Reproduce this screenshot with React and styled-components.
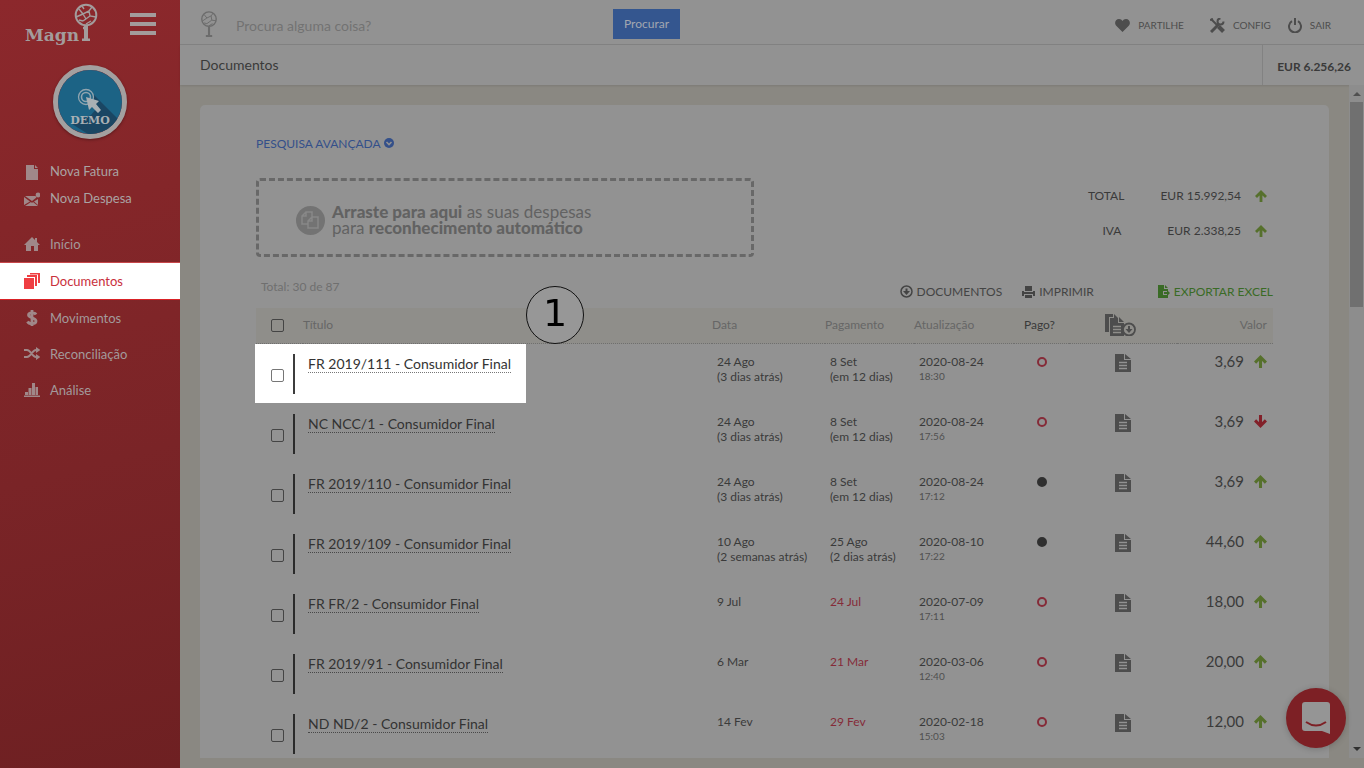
import React from "react";
import styled, { createGlobalStyle, css } from "styled-components";

const colors = {
  surface: "#929292",
  canvas: "#8a8882",
  band: "#8f8e8a",
  line: "#828282",
  text: "#3a3a3a",
  muted: "#666666",
  pale: "#727272",
  icon: "#4d4d4d",
  blue: "#34508a",
  red: "#852b38",
  green: "#56702c",
  side: "#a39a9b",
};

const GlobalStyle = createGlobalStyle`
  * {
    box-sizing: border-box;
  }
  body {
    margin: 0;
    background: ${colors.canvas};
    color: ${colors.text};
    font-family: Lato, "Liberation Sans", sans-serif;
    font-size: 13px;
    line-height: 15px;
  }
  button,
  input {
    font: inherit;
  }
  a {
    color: inherit;
    text-decoration: none;
  }
  svg {
    display: block;
    flex: none;
  }
`;

const Shell = styled.div`
  display: grid;
  grid-template-columns: 180px minmax(0, 1fr);
  height: 100vh;
  overflow: hidden;
`;

const Sidebar = styled.aside`
  background: linear-gradient(165deg, #8c282c 0%, #842629 28%, #7a2427 60%, #6e2022 100%);
`;

const Brand = styled.div`
  display: flex;
  justify-content: space-between;
  height: 47px;
  padding: 0 24px 0 25px;
`;

const Plain = styled.button`
  display: flex;
  align-items: center;
  padding: 0;
  border: 0;
  background: none;
  color: inherit;
  cursor: pointer;
`;

const Avatar = styled.div`
  width: 74px;
  height: 74px;
  margin: 18px auto 19px 53px;
  border: 5px solid #a3a0a0;
  border-radius: 50%;
  overflow: hidden;
  box-shadow: 0 1px 3px rgba(0, 0, 0, 0.35);
`;

const Nav = styled.nav`
  display: flex;
  flex-direction: column;
  margin-bottom: ${(p) => (p.$tight ? "14px" : "0")};
`;

const NavLink = styled.a`
  display: flex;
  align-items: center;
  gap: 10px;
  height: ${(p) => (p.$tight ? "27px" : "36px")};
  padding-left: 24px;
  color: ${(p) => (p.$strong ? "#aaa3a3" : colors.side)};
  font-size: 13px;

  svg {
    width: 16px;
    height: 16px;
    fill: #a08889;
  }

  ${(p) =>
    p.$active &&
    css`
      height: 38px;
      border-top: 1px solid #c8474a;
      border-bottom: 1px solid #d92226;
      background: #ffffff;
      color: #c9303c;

      svg {
        fill: #ef3e42;
      }
    `}
`;

const Page = styled.div`
  display: flex;
  flex-direction: column;
  min-width: 0;
  height: 100vh;
  padding-bottom: 10px;
`;

const TopBar = styled.header`
  display: flex;
  align-items: center;
  flex: none;
  height: 45px;
  padding: 0 33px 0 20px;
  border-bottom: 1px solid ${colors.line};
  background: ${colors.surface};
`;

const SearchForm = styled.form`
  display: flex;
  align-items: center;
  flex: 1;
  height: 44px;
  padding-top: 3px;
`;

const SearchInput = styled.input`
  width: 377px;
  margin-left: 18px;
  padding: 3px 0 0;
  border: 0;
  outline: 0;
  background: none;
  color: ${colors.text};
  font-size: 14px;

  &::placeholder {
    color: ${colors.pale};
    opacity: 1;
  }
`;

const SearchButton = styled.button`
  height: 30px;
  padding: 0 11px;
  border: 0;
  background: #34568f;
  color: #a2a7b0;
  font-size: 12px;
`;

const TopLinks = styled.div`
  display: flex;
  padding-top: 6px;
`;

const TopLink = styled.a`
  display: flex;
  align-items: center;
  gap: 8px;
  margin-left: ${(p) => (p.$close ? "17px" : "26px")};
  color: ${colors.icon};
  font-size: 10px;
`;

const TitleBar = styled.div`
  display: flex;
  align-items: stretch;
  justify-content: space-between;
  flex: none;
  height: 40px;
  padding-left: 20px;
  background: ${colors.surface};
  box-shadow: 0 1px 2px rgba(0, 0, 0, 0.1);
`;

const PageTitle = styled.h1`
  margin: 0;
  font-size: 14px;
  font-weight: 400;
  line-height: 40px;
`;

const Balance = styled.div`
  padding: 2px 13px 0 14px;
  border-left: 1px solid ${colors.line};
  font-size: 12px;
  font-weight: 700;
  line-height: 40px;
`;

const Body = styled.div`
  display: flex;
  flex: 1;
  min-height: 0;
`;

const Content = styled.main`
  flex: 1;
  min-width: 0;
  padding: 20px 20px 0;
  overflow: hidden;
`;

const Card = styled.section`
  min-height: 100%;
  padding: 30px 56px;
  border-radius: 5px 5px 0 0;
  background: ${colors.surface};
`;

const ScrollTrack = styled.div`
  display: flex;
  flex-direction: column;
  align-items: center;
  justify-content: space-between;
  width: 15px;
  padding: 7px 0;
  background: #8d8d8d;
`;

const ScrollThumb = styled.div`
  width: 13px;
  height: 205px;
  margin: 6px 0 auto;
  background: #707070;
`;

const Advanced = styled(Plain)`
  gap: 3px;
  height: 16px;
  color: ${colors.blue};
  font-size: 12px;
`;

const Summary = styled.div`
  display: flex;
  justify-content: space-between;
  align-items: flex-start;
  margin-top: 27px;
`;

const DropZone = styled.div`
  display: flex;
  align-items: center;
  gap: 7px;
  width: 498px;
  height: 79px;
  padding: 5px 0 0 37px;
  border: 3px dashed #686868;
  border-radius: 4px;
  color: #626262;
  font-size: 17px;
  line-height: 16px;

  b {
    font-weight: 900;
  }
`;

const Totals = styled.dl`
  display: grid;
  grid-template-columns: auto auto auto;
  justify-items: end;
  align-items: center;
  column-gap: 14px;
  margin: 0;
  padding-right: 6px;
  font-size: 12px;
  line-height: 35px;

  dt {
    padding-right: 22px;
  }
  dt:last-of-type {
    padding-right: 25px;
  }
  dd {
    margin: 0;
  }
`;

const Actions = styled.div`
  display: flex;
  align-items: flex-start;
  justify-content: space-between;
  margin-top: 22px;
  height: 29px;
`;

const Count = styled.span`
  padding-left: 5px;
  color: #6f6f6f;
  font-size: 12px;
`;

const ActionList = styled.div`
  display: flex;
  padding-top: 5px;
`;

const Action = styled(Plain)`
  gap: 4px;
  margin-left: ${(p) => (p.$wide ? "64px" : "20px")};
  color: ${(p) => (p.$green ? "#3a6b26" : "#444444")};
  font-size: 12px;
`;

const Table = styled.table`
  width: 100%;
  border-collapse: separate;
  border-spacing: 0;
  table-layout: fixed;
`;

const Head = styled.th`
  height: 36px;
  padding: 0 ${(p) => p.$padRight || "0"} 2px ${(p) => p.$padLeft || "0"};
  border-bottom: 1px dotted #6f6f6f;
  background: ${colors.band};
  color: ${(p) => (p.$dark ? colors.text : colors.muted)};
  font-size: 12px;
  font-weight: 400;
  text-align: ${(p) => p.$align || "left"};
`;

const Cell = styled.td`
  height: 60px;
  padding: 10px 0 0 ${(p) => (p.$indent ? "5px" : "0")};
  color: ${(p) => (p.$late ? colors.red : colors.text)};
  font-size: 12px;
  line-height: 15px;
  vertical-align: top;
`;

const CellCenter = styled.div`
  display: flex;
  justify-content: center;
`;

const Time = styled.div`
  color: #505050;
  font-size: 10px;
`;

const TitleCell = styled.td`
  height: 60px;
  padding: 0;
  vertical-align: top;
`;

const TitleBox = styled.div`
  display: flex;
  align-items: flex-start;
  width: 271px;
  height: 59px;
  margin-left: -1px;
  padding: 10px 0 0 16px;
  background: ${(p) => (p.$lit ? "#ffffff" : "none")};
`;

const Check = styled.input`
  appearance: none;
  display: block;
  width: 13px;
  height: 13px;
  margin: ${(p) => (p.$head ? "2px 0 0 15px" : "15px 9px 0 0")};
  border: 1px solid ${(p) => (p.$lit ? "#767676" : "#444444")};
  border-radius: 2px;

  &:checked {
    background: #444444;
  }
`;

const DocLink = styled.a`
  margin-left: 13px;
  padding-top: 2px;
  border-bottom: 1px dotted ${(p) => (p.$lit ? "#777777" : "#484848")};
  color: #333333;
  font-size: 14px;
  line-height: 16px;
`;

const Bar = styled.div`
  width: 2px;
  height: 40px;
  background: ${(p) => (p.$lit ? "#3c3c3c" : "#2b2b2b")};
`;

const Paid = styled.span`
  width: 10px;
  height: 10px;
  margin-top: 3px;
  border: 2px solid ${(p) => (p.$paid ? "#303030" : colors.red)};
  border-radius: 50%;
  background: ${(p) => (p.$paid ? "#303030" : "none")};
`;

const Amount = styled.div`
  display: flex;
  align-items: center;
  justify-content: flex-end;
  gap: 10px;
  padding-right: 6px;
  font-size: 15px;
`;

const StepBadge = styled.div`
  position: fixed;
  top: 286px;
  left: 526px;
  width: 58px;
  height: 58px;
  border: 1px solid #111111;
  border-radius: 50%;
  background: #979797;
  color: #000000;
  font-family: "DejaVu Sans", sans-serif;
  font-size: 38px;
  line-height: 52px;
  text-align: center;
`;

const ChatButton = styled.button`
  position: fixed;
  right: 18px;
  bottom: 20px;
  display: flex;
  align-items: center;
  justify-content: center;
  width: 60px;
  height: 60px;
  padding: 0;
  border: 0;
  border-radius: 50%;
  background: #7d2025;
  box-shadow: 0 1px 6px rgba(0, 0, 0, 0.2);
`;

const TreeMark = ({ color, width, height }) => (
  <svg width={width} height={height} viewBox="0 0 24 37" fill="none" stroke={color} strokeWidth="2">
    <circle cx="12" cy="11.5" r="10.3" />
    <path d="M12 22v13M7.5 35.5h9" strokeWidth="3" />
    <path d="M5 5l4 5 6-3 3-4M9 10l-6 4M15 7l1 6 6 1M16 13l-7 5M9 18l-4-1M12 21l5-3" strokeWidth="1.4" />
  </svg>
);

const Logo = () => (
  <svg width="74" height="47" viewBox="0 0 74 47" fill="none">
    <text x="0" y="41" fill="#a39c9c" fontFamily="DejaVu Serif, serif" fontWeight="700" fontSize="17">
      Magn
    </text>
    <g stroke="#a39c9c">
      <circle cx="61" cy="15" r="10.3" strokeWidth="2" />
      <path d="M61 25v15" strokeWidth="4" />
      <path d="M57 39.8h8M58 28h4" strokeWidth="2.5" />
      <path
        d="M54 9l4 5 6-3 3-4M58 14l-7 3M64 11l1 5 6 1M65 16l-7 5M58 21l-4-1M61 24l5-3M58 14l3 5M57 6l2 3"
        strokeWidth="1.4"
      />
    </g>
  </svg>
);

const DemoPicture = () => (
  <svg width="64" height="64" viewBox="0 0 64 64">
    <rect width="64" height="64" fill="#1c6385" />
    <path d="M34 23L64 53v11H30L14 54l19-9 6-7z" fill="#1a4663" />
    <g fill="none" stroke="#8fa4af">
      <circle cx="28" cy="27" r="7.5" strokeWidth="1.3" />
      <circle cx="28" cy="27" r="4.5" strokeWidth="1.6" />
    </g>
    <path d="M28 27l13 4-3 3 5 6-3 3-6-6-3 3z" fill="#a9b0b4" />
    <text x="32" y="54" textAnchor="middle" fill="#a9b0b4" fontFamily="DejaVu Serif, serif" fontWeight="700" fontSize="11">
      DEMO
    </text>
  </svg>
);

const navIcons = {
  file: <path d="M2 1h8v4h4v11H2zM11 1l3 3h-3z" />,
  mail: (
    <>
      <path d="M0 6l6 4.500L0 14zM1 5h10.500l1 1.500L8 10zM14 8v6l-4-3.500zM1 15l6-4 1 1 1-1 5 4z" />
      <circle cx="14" cy="4" r="2.400" />
    </>
  ),
  home: <path d="M8 1l3 3V2h2v4l3 3h-2v6h-4v-5H7v5H2V9H0z" />,
  docs: <path d="M0 5h10v11H0zM3 2h10v11h-2V4H3zM6 0h10v10h-2V1.500H6z" />,
  dollar: (
    <path
      d="M12 4.500C11 2.500 4.500 2 4.500 5S12 7.500 12 11s-7 3.500-8.500.5M8 0v16"
      fill="none"
      stroke="#a08889"
      strokeWidth="2.800"
    />
  ),
  shuffle: (
    <>
      <path d="M0 4h3c4 0 5 7 9 7h1M0 11h3c4 0 5-7 9-7h1" fill="none" stroke="#a08889" strokeWidth="2" />
      <path d="M12 1l4.500 3L12 7zM12 8l4.500 3-4.500 3z" />
    </>
  ),
  chart: <path d="M0 13.500h16V15H0zM1 10h3v3H1zM4.500 6h3v7h-3zM8 1h3v12H8zM11.500 5H14v8h-2.500z" />,
};

const Icon = ({ name }) => <svg viewBox="0 0 16 16">{navIcons[name]}</svg>;

const Arrow = ({ down, size = 13 }) => (
  <svg
    width={size}
    height={size}
    viewBox="0 0 12 12"
    fill="none"
    stroke={down ? "#822029" : colors.green}
    strokeWidth="2.800"
  >
    <path d={down ? "M6 0v10M1 5l5 5 5-5" : "M6 12V2M1 7l5-5 5 5"} />
  </svg>
);

const DocIcon = () => (
  <svg width="16" height="18" viewBox="0 0 16 18">
    <path d="M0 0h9v6h7v12H0zM10 0l6 5h-6z" fill={colors.icon} />
    <path d="M4 8.500h8M4 11.500h8M4 14.500h8" stroke={colors.surface} strokeWidth="1.300" />
  </svg>
);

const DocsDownload = () => (
  <svg width="31" height="22" viewBox="0 0 31 22">
    <path d="M0 0h8v3H4v15H0zM9 0l4 4H9z" fill={colors.icon} />
    <path d="M5 4h8v5h6v13H5zM14 3l5 5h-5z" fill={colors.icon} />
    <path d="M8 12.500h8M8 15.500h8M8 18.500h8" stroke={colors.band} strokeWidth="1.300" />
    <circle cx="24" cy="15.500" r="6" fill={colors.band} stroke={colors.icon} strokeWidth="1.800" />
    <path d="M23 12h2v3h2.500L24 19l-3.500-4H23z" fill={colors.icon} />
  </svg>
);

const columns = ["47px", "auto", "113px", "89px", "100px", "55px", "108px", "96px"];

const rows = [
  { title: "FR 2019/111 - Consumidor Final", date: "24 Ago", ago: "(3 dias atrás)", due: "8 Set", dueIn: "(em 12 dias)", updated: "2020-08-24", time: "18:30", value: "3,69", lit: true },
  { title: "NC NCC/1 - Consumidor Final", date: "24 Ago", ago: "(3 dias atrás)", due: "8 Set", dueIn: "(em 12 dias)", updated: "2020-08-24", time: "17:56", value: "3,69", down: true },
  { title: "FR 2019/110 - Consumidor Final", date: "24 Ago", ago: "(3 dias atrás)", due: "8 Set", dueIn: "(em 12 dias)", updated: "2020-08-24", time: "17:12", value: "3,69", paid: true },
  { title: "FR 2019/109 - Consumidor Final", date: "10 Ago", ago: "(2 semanas atrás)", due: "25 Ago", dueIn: "(2 dias atrás)", updated: "2020-08-10", time: "17:22", value: "44,60", paid: true },
  { title: "FR FR/2 - Consumidor Final", date: "9 Jul", due: "24 Jul", late: true, updated: "2020-07-09", time: "17:11", value: "18,00" },
  { title: "FR 2019/91 - Consumidor Final", date: "6 Mar", due: "21 Mar", late: true, updated: "2020-03-06", time: "12:40", value: "20,00" },
  { title: "ND ND/2 - Consumidor Final", date: "14 Fev", due: "29 Fev", late: true, updated: "2020-02-18", time: "15:03", value: "12,00" },
];

const DocumentRow = ({ row }) => (
  <tr>
    <TitleCell colSpan={2}>
      <TitleBox $lit={row.lit}>
        <Check type="checkbox" aria-label={row.title} $lit={row.lit} />
        <Bar $lit={row.lit} />
        <DocLink href="#doc" $lit={row.lit}>
          {row.title}
        </DocLink>
      </TitleBox>
    </TitleCell>
    <Cell $indent>
      {row.date}
      <div>{row.ago}</div>
    </Cell>
    <Cell $indent $late={row.late}>
      {row.due}
      <div>{row.dueIn}</div>
    </Cell>
    <Cell $indent>
      {row.updated}
      <Time>{row.time}</Time>
    </Cell>
    <Cell>
      <CellCenter>
        <Paid $paid={row.paid} />
      </CellCenter>
    </Cell>
    <Cell>
      <CellCenter>
        <DocIcon />
      </CellCenter>
    </Cell>
    <Cell>
      <Amount>
        {row.value}
        <Arrow down={row.down} />
      </Amount>
    </Cell>
  </tr>
);

const App = () => {
  return (
    <>
      <GlobalStyle />
      <Shell>
        <Sidebar>
          <Brand>
            <Logo />
            <Plain aria-label="Menu">
              <svg width="26" height="22" viewBox="0 0 26 22" stroke="#a39c9c" strokeWidth="4">
                <path d="M0 2h26M0 11h26M0 20h26" />
              </svg>
            </Plain>
          </Brand>
          <Avatar>
            <DemoPicture />
          </Avatar>
          <Nav $tight>
            <NavLink href="#fatura" $tight $strong><Icon name="file" />Nova Fatura</NavLink>
            <NavLink href="#despesa" $tight $strong><Icon name="mail" />Nova Despesa</NavLink>
          </Nav>
          <Nav>
            <NavLink href="#inicio"><Icon name="home" />Início</NavLink>
            <NavLink href="#documentos" $active><Icon name="docs" />Documentos</NavLink>
            <NavLink href="#movimentos"><Icon name="dollar" />Movimentos</NavLink>
            <NavLink href="#reconciliacao"><Icon name="shuffle" />Reconciliação</NavLink>
            <NavLink href="#analise"><Icon name="chart" />Análise</NavLink>
          </Nav>
        </Sidebar>
        <Page>
          <TopBar>
            <SearchForm onSubmit={(e) => e.preventDefault()}>
              <TreeMark color="#6c6c6c" width="18" height="26" />
              <SearchInput aria-label="Procurar" placeholder="Procura alguma coisa?" />
              <SearchButton type="submit">Procurar</SearchButton>
            </SearchForm>
            <TopLinks>
              <TopLink href="#partilhe">
                <svg width="15" height="13" viewBox="0 0 15 13" fill={colors.icon}>
                  <path d="M7.500 13L1 6.500C-1 4 .5 0 4 0c1.600 0 2.800.8 3.500 2C8.200.8 9.400 0 11 0c3.500 0 5 4 3 6.500z" />
                </svg>
                PARTILHE
              </TopLink>
              <TopLink href="#config">
                <svg width="15" height="15" viewBox="0 0 15 15" fill="none" stroke={colors.icon}>
                  <path d="M1 14l8-8" strokeWidth="3" />
                  <path d="M13.500 3.500a3 3 0 1 1-3-3" strokeWidth="2" />
                  <path d="M1 1l6 6" strokeWidth="2" />
                  <path d="M8.500 8.500l5 5" strokeWidth="4" />
                  <path d="M0 2l3-1" strokeWidth="2" />
                </svg>
                CONFIG
              </TopLink>
              <TopLink href="#sair" $close>
                <svg width="14" height="15" viewBox="0 0 14 15" fill="none" stroke={colors.icon} strokeWidth="2">
                  <path d="M4 3.200a6 6 0 1 0 6 0M7 0v7" />
                </svg>
                SAIR
              </TopLink>
            </TopLinks>
          </TopBar>
          <TitleBar>
            <PageTitle>Documentos</PageTitle>
            <Balance>EUR 6.256,26</Balance>
          </TitleBar>
          <Body>
            <Content>
              <Card>
                <Advanced>
                  PESQUISA AVANÇADA
                  <svg width="10" height="10" viewBox="0 0 10 10">
                    <circle cx="5" cy="5" r="5" fill={colors.blue} />
                    <path d="M2.500 4L5 6.500 7.500 4" fill="none" stroke={colors.surface} strokeWidth="1.600" />
                  </svg>
                </Advanced>
                <Summary>
                  <DropZone>
                    <svg width="29" height="29" viewBox="0 0 29 29">
                      <circle cx="14.500" cy="14.500" r="14.500" fill="#737373" />
                      <path
                        d="M12 18H6v-8l4-4h6v5M10 6v4H6M12 22v-7l4-4h6v11zM16 11v4h-4"
                        fill="none"
                        stroke="#888888"
                        strokeWidth="1.500"
                      />
                    </svg>
                    <div>
                      <b>Arraste para aqui</b> as suas despesas
                      <br />
                      para <b>reconhecimento automático</b>
                    </div>
                  </DropZone>
                  <Totals>
                    <dt>TOTAL</dt>
                    <dd>EUR 15.992,54</dd>
                    <Arrow size={12} />
                    <dt>IVA</dt>
                    <dd>EUR 2.338,25</dd>
                    <Arrow size={12} />
                  </Totals>
                </Summary>
                <Actions>
                  <Count>Total: 30 de 87</Count>
                  <ActionList>
                    <Action>
                      <svg width="13" height="13" viewBox="0 0 13 13">
                        <circle cx="6.500" cy="6.500" r="5.500" fill="none" stroke="#444444" strokeWidth="1.500" />
                        <path d="M5.500 3.500h2v2.500H10L6.500 10 3 6h2.500z" fill="#444444" />
                      </svg>
                      DOCUMENTOS
                    </Action>
                    <Action>
                      <svg width="13" height="12" viewBox="0 0 13 12" fill="#444444">
                        <path d="M3 0h7v5H3zM0 5h2v1h9V5h2v5h-2V8H2v2H0zM3 9h7v3H3z" />
                      </svg>
                      IMPRIMIR
                    </Action>
                    <Action $green $wide>
                      <svg width="12" height="13" viewBox="0 0 12 13" fill="#3a6b26">
                        <path d="M0 0h6v4h4v2H5v4h5v3H0zM7 0l3 3H7zM6 7h3V5l3 3-3 3V9H6z" />
                      </svg>
                      EXPORTAR EXCEL
                    </Action>
                  </ActionList>
                </Actions>
                <Table>
                  <colgroup>
                    {columns.map((width, index) => (
                      <col key={index} style={{ width }} />
                    ))}
                  </colgroup>
                  <thead>
                    <tr>
                      <Head>
                        <Check $head type="checkbox" aria-label="Selecionar todos" />
                      </Head>
                      <Head>Título</Head>
                      <Head>Data</Head>
                      <Head>Pagamento</Head>
                      <Head>Atualização</Head>
                      <Head $dark $padLeft="10px">Pago?</Head>
                      <Head $padRight="6px">
                        <CellCenter>
                          <DocsDownload />
                        </CellCenter>
                      </Head>
                      <Head $align="right" $padRight="6px">Valor</Head>
                    </tr>
                  </thead>
                  <tbody>
                    {rows.map((row) => (
                      <DocumentRow key={row.title} row={row} />
                    ))}
                  </tbody>
                </Table>
              </Card>
            </Content>
            <ScrollTrack aria-hidden="true">
              <svg width="8" height="4" viewBox="0 0 8 4"><path d="M0 4l4-4 4 4z" fill="#505050" /></svg>
              <ScrollThumb />
              <svg width="8" height="4" viewBox="0 0 8 4"><path d="M0 0l4 4 4-4z" fill="#303030" /></svg>
            </ScrollTrack>
          </Body>
        </Page>
      </Shell>
      <StepBadge>1</StepBadge>
      <ChatButton aria-label="Chat">
        <svg width="28" height="32" viewBox="0 0 28 32">
          <path d="M3 0h22q3 0 3 3v29l-8-3H3q-3 0-3-3V3q0-3 3-3z" fill="#959595" />
          <path d="M4 20q10 7 20 0" fill="none" stroke="#7d2025" strokeWidth="2" />
        </svg>
      </ChatButton>
    </>
  );
};

export default App;
